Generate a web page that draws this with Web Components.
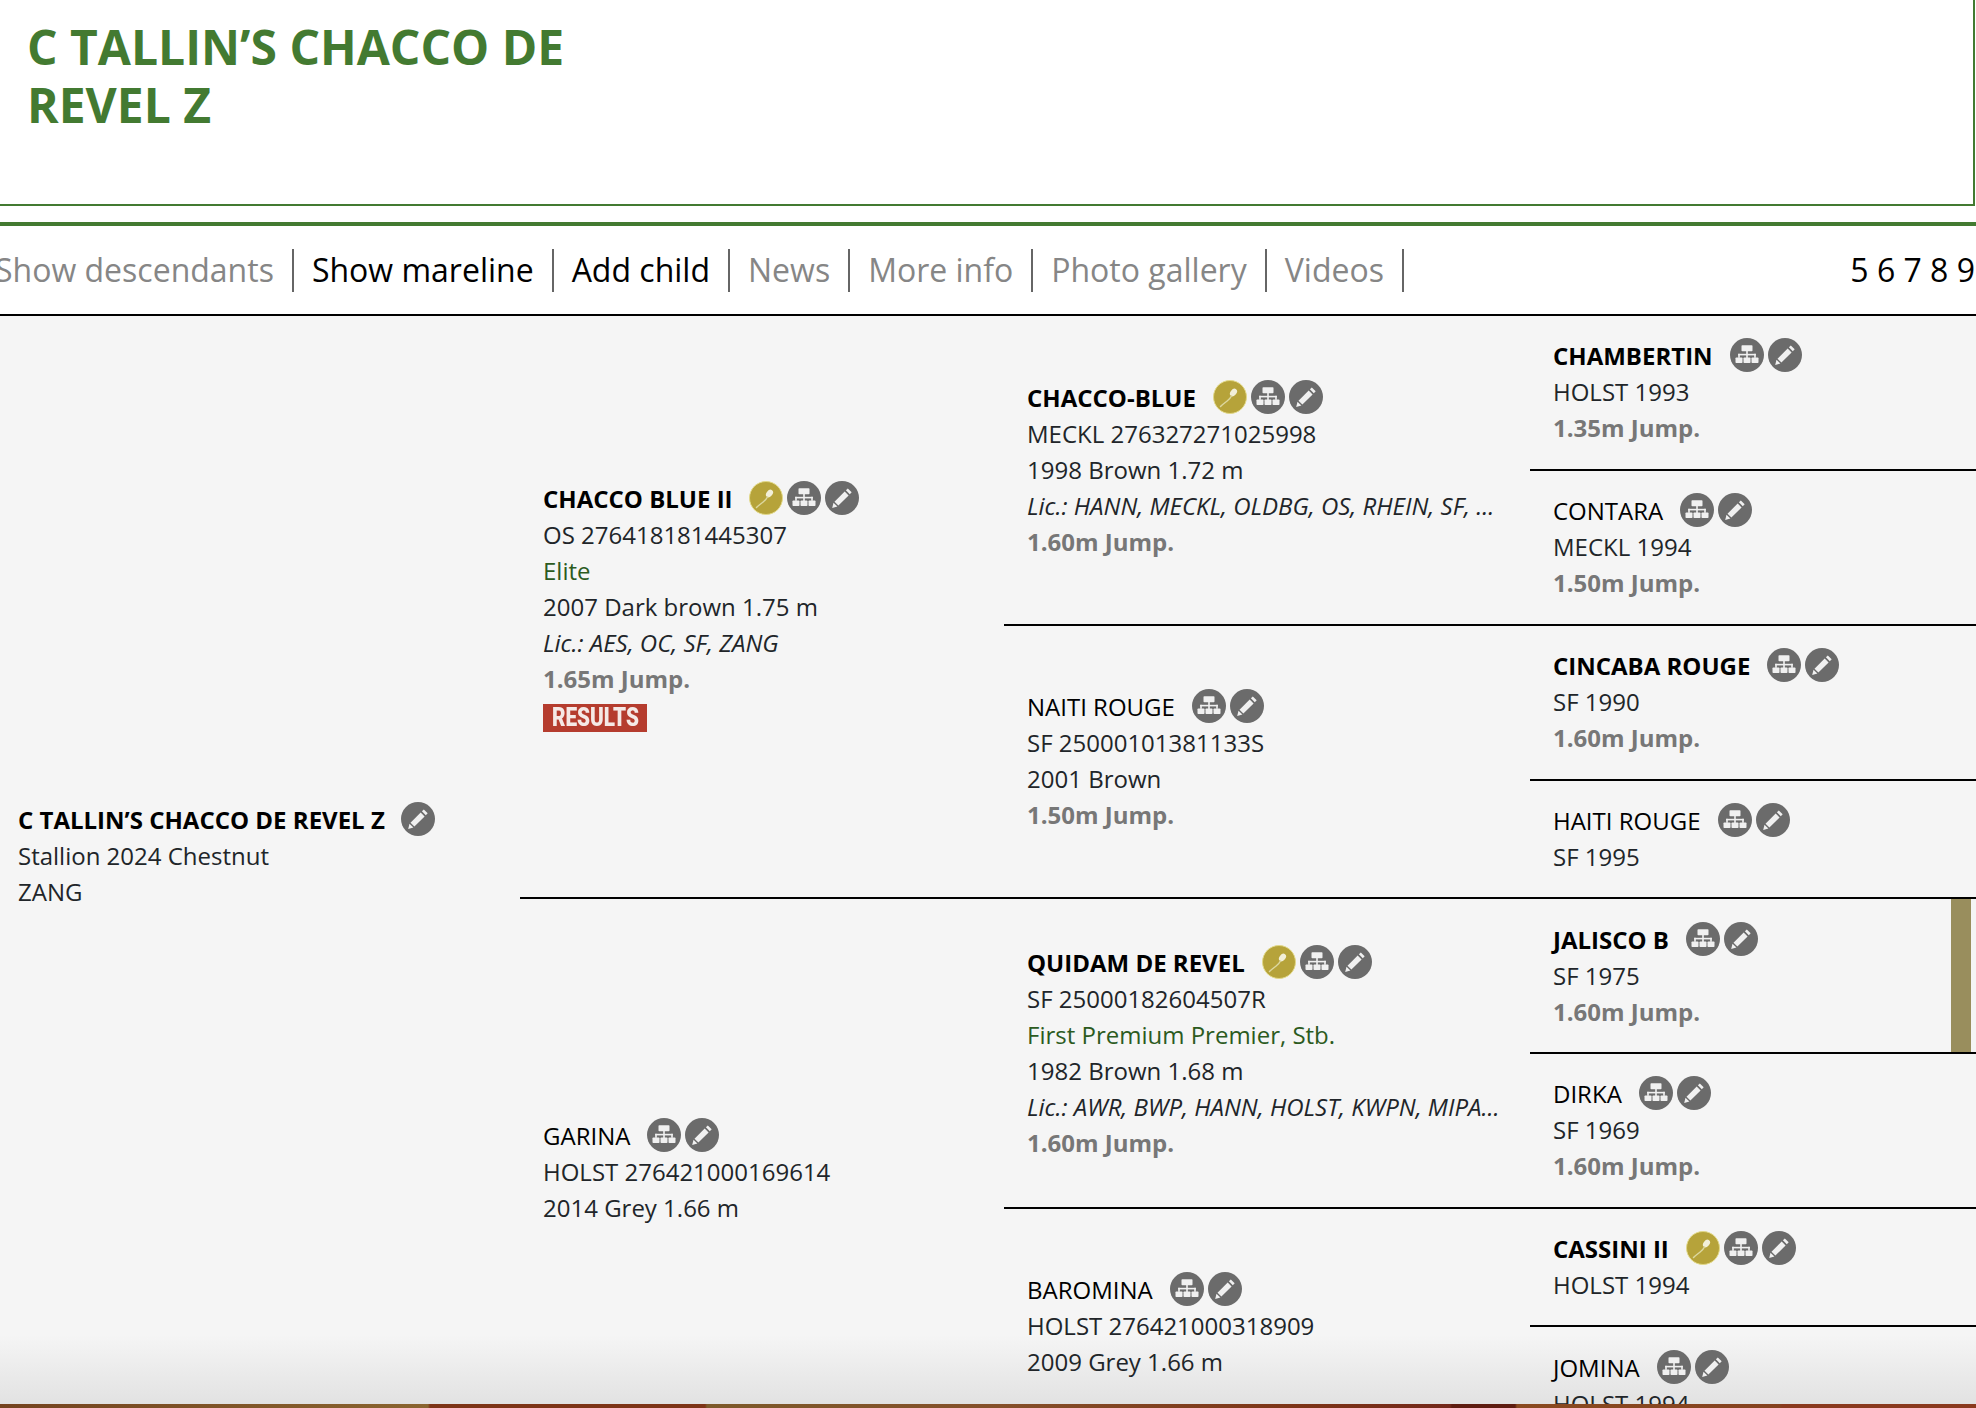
<!DOCTYPE html>
<html>
<head>
<meta charset="utf-8">
<title>C TALLIN'S CHACCO DE REVEL Z</title>
<style>
  html, body { margin: 0; height: 100%; overflow: hidden; background: #fff; }
  body { font-family: "Open Sans", sans-serif; color: #212529; }
  .wrap { margin-left: -5px; width: 1981px; }
</style>
</head>
<body>
<div class="wrap">
  <ped-title>C TALLIN’S CHACCO DE<br>REVEL Z</ped-title>
  <ped-nav pages="5 6 7 8 9">
    <ped-link off>Show descendants</ped-link>
    <ped-link>Show mareline</ped-link>
    <ped-link>Add child</ped-link>
    <ped-link off>News</ped-link>
    <ped-link off>More info</ped-link>
    <ped-link off>Photo gallery</ped-link>
    <ped-link off>Videos</ped-link>
  </ped-nav>
  <ped-tree>
    <ped-horse col="1" row="1" span="8" name="C TALLIN’S CHACCO DE REVEL Z" stallion icons="edit" root>
      <div>Stallion 2024 Chestnut</div>
      <div>ZANG</div>
    </ped-horse>

    <ped-horse col="2" row="1" span="4" name="CHACCO BLUE II" stallion icons="gold tree edit">
      <div>OS 276418181445307</div>
      <div class="pred">Elite</div>
      <div>2007 Dark brown 1.75 m</div>
      <div class="lic">Lic.: AES, OC, SF, ZANG</div>
      <div class="jump">1.65m Jump.</div>
      <ped-results>RESULTS</ped-results>
    </ped-horse>
    <ped-horse col="3" row="1" span="2" name="CHACCO-BLUE" stallion icons="gold tree edit">
      <div>MECKL 276327271025998</div>
      <div>1998 Brown 1.72 m</div>
      <div class="lic">Lic.: HANN, MECKL, OLDBG, OS, RHEIN, SF, ...</div>
      <div class="jump">1.60m Jump.</div>
    </ped-horse>
    <ped-horse col="4" row="1" name="CHAMBERTIN" stallion icons="tree edit">
      <div>HOLST 1993</div>
      <div class="jump">1.35m Jump.</div>
    </ped-horse>
    <ped-horse col="4" row="2" name="CONTARA" icons="tree edit">
      <div>MECKL 1994</div>
      <div class="jump">1.50m Jump.</div>
    </ped-horse>
    <ped-horse col="3" row="3" span="2" name="NAITI ROUGE" icons="tree edit">
      <div>SF 25000101381133S</div>
      <div>2001 Brown</div>
      <div class="jump">1.50m Jump.</div>
    </ped-horse>
    <ped-horse col="4" row="3" name="CINCABA ROUGE" stallion icons="tree edit">
      <div>SF 1990</div>
      <div class="jump">1.60m Jump.</div>
    </ped-horse>
    <ped-horse col="4" row="4" name="HAITI ROUGE" icons="tree edit" short>
      <div>SF 1995</div>
    </ped-horse>

    <ped-horse col="2" row="5" span="4" name="GARINA" icons="tree edit" nudge>
      <div>HOLST 276421000169614</div>
      <div>2014 Grey 1.66 m</div>
    </ped-horse>
    <ped-horse col="3" row="5" span="2" name="QUIDAM DE REVEL" stallion icons="gold tree edit">
      <div>SF 25000182604507R</div>
      <div class="pred">First Premium Premier, Stb.</div>
      <div>1982 Brown 1.68 m</div>
      <div class="lic">Lic.: AWR, BWP, HANN, HOLST, KWPN, MIPA...</div>
      <div class="jump">1.60m Jump.</div>
    </ped-horse>
    <ped-horse col="4" row="5" name="JALISCO B" stallion icons="tree edit" marked>
      <div>SF 1975</div>
      <div class="jump">1.60m Jump.</div>
    </ped-horse>
    <ped-horse col="4" row="6" name="DIRKA" icons="tree edit">
      <div>SF 1969</div>
      <div class="jump">1.60m Jump.</div>
    </ped-horse>
    <ped-horse col="3" row="7" span="2" name="BAROMINA" icons="tree edit">
      <div>HOLST 276421000318909</div>
      <div>2009 Grey 1.66 m</div>
    </ped-horse>
    <ped-horse col="4" row="7" name="CASSINI II" stallion icons="gold tree edit" short>
      <div>HOLST 1994</div>
    </ped-horse>
    <ped-horse col="4" row="8" name="JOMINA" icons="tree edit" short last>
      <div>HOLST 1994</div>
    </ped-horse>
  </ped-tree>
</div>
<ped-footer></ped-footer>

<script>
class PedTitle extends HTMLElement {
  constructor() {
    super();
    this.attachShadow({mode: 'open'}).innerHTML = `
      <style>
        :host { display: block; height: 204px; box-sizing: content-box; width: 1978px;
                border-bottom: 2px solid #437a31; border-right: 2px solid #437a31; }
        h1 { margin: 0; padding: 18px 0 0 32px; font: 700 48px/58px "Open Sans", sans-serif; color: #437a31; }
      </style>
      <h1><slot></slot></h1>`;
  }
}
customElements.define('ped-title', PedTitle);

class PedLink extends HTMLElement {
  constructor() {
    super();
    this.attachShadow({mode: 'open'}).innerHTML = `
      <style>
        :host { display: block; padding: 0 18px; border-right: 2px solid #666; height: 43px;
                font-size: 32px; line-height: 41px; color: #000; white-space: nowrap; }
        :host([off]) { color: #868686; }
      </style>
      <slot></slot>`;
  }
}
customElements.define('ped-link', PedLink);

class PedNav extends HTMLElement {
  constructor() {
    super();
    this.attachShadow({mode: 'open'}).innerHTML = `
      <style>
        :host { display: flex; align-items: center; margin-top: 16px; height: 88px; box-sizing: content-box;
                border-top: 4px solid #437a31; border-bottom: 2px solid #000; background: #fff; }
        .links { display: flex; margin-left: -18px; }
        .pages { margin-left: auto; margin-right: 1px; padding-bottom: 2px; font-size: 32px; color: #000; white-space: nowrap; }
      </style>
      <div class="links"><slot></slot></div>
      <div class="pages"></div>`;
  }
  connectedCallback() {
    this.shadowRoot.querySelector('.pages').textContent = this.getAttribute('pages');
  }
}
customElements.define('ped-nav', PedNav);

class PedTree extends HTMLElement {
  constructor() {
    super();
    this.attachShadow({mode: 'open'}).innerHTML = `
      <style>
        /* grey fades out towards the footer strip, behind the text */
        :host { display: grid; grid-template-columns: 525px 484px 526px 446px;
                background: linear-gradient(#f5f5f5 1335px, #e2e2e2 1404px) fixed; }
      </style>
      <slot></slot>`;
  }
}
customElements.define('ped-tree', PedTree);

const ICONS = {
  tree: `<svg viewBox="0 0 34 34"><circle cx="17" cy="17" r="17" fill="#6b6b6b"/><g fill="#f0f0f0">
    <rect x="11.5" y="7.3" width="11" height="6" rx=".8"/>
    <rect x="5.5" y="19.5" width="7" height="5.6" rx=".8"/><rect x="13.5" y="19.5" width="7" height="5.6" rx=".8"/><rect x="21.5" y="19.5" width="7" height="5.6" rx=".8"/>
    <rect x="16.2" y="13" width="1.6" height="7"/><rect x="8.2" y="15.8" width="17.6" height="1.6"/>
    <rect x="8.2" y="15.8" width="1.6" height="4"/><rect x="24.2" y="15.8" width="1.6" height="4"/></g></svg>`,
  edit: `<svg viewBox="0 0 34 34"><circle cx="17" cy="17" r="17" fill="#6b6b6b"/>
    <path d="M22.8 7.4l3.9 3.9-1.9 1.9-3.9-3.9zM19.7 10.5l3.9 3.9-10.2 10.2-3.9-3.9zM8.5 21.7l3.9 3.9-5.2 1.3z" fill="#f0f0f0"/></svg>`,
  gold: `<svg viewBox="0 0 34 34"><circle cx="17" cy="17" r="16.5" fill="#b6a33a" stroke="#e2d98a" stroke-width="1"/>
    <ellipse cx="20.5" cy="12.5" rx="3" ry="4.2" transform="rotate(38 20.5 12.5)" fill="#f2efd8"/>
    <path d="M18.5 16C17 19 15.5 20 13.5 21.5 11.5 23 9.5 24.5 7.5 26.5" fill="none" stroke="#dcd79f" stroke-width="1.5" stroke-linecap="round"/></svg>`
};

class PedIcon extends HTMLElement {
  constructor() {
    super();
    this.attachShadow({mode: 'open'}).innerHTML = `
      <style>
        :host { display: block; width: 34px; height: 34px; }
        svg { display: block; width: 34px; height: 34px; filter: blur(.35px); }
      </style>`;
  }
  connectedCallback() {
    this.shadowRoot.innerHTML += ICONS[this.getAttribute('type')];
  }
}
customElements.define('ped-icon', PedIcon);

class PedResults extends HTMLElement {
  constructor() {
    super();
    this.attachShadow({mode: 'open'}).innerHTML = `
      <style>
        :host { display: block; width: 104px; height: 28px; background: #b53c2e; color: #f5e9e6; margin-top: 7px;
                font: 900 25px/28px Roboto, sans-serif; text-align: center; overflow: hidden; }
        span { display: inline-block; transform: scaleX(.83); transform-origin: 50% 50%; filter: blur(.4px); margin: 0 -14px; }
      </style>
      <span><slot></slot></span>`;
  }
}
customElements.define('ped-results', PedResults);

class PedHorse extends HTMLElement {
  constructor() {
    super();
    this.attachShadow({mode: 'open'}).innerHTML = `
      <style>
        :host { display: flex; flex-direction: column; justify-content: center; position: relative;
                box-sizing: border-box; padding: 22px 0 23px 23px; border-bottom: 2px solid #000;
                font-size: 24px; line-height: 36px; color: #212529; }
        :host([root]) { border-bottom: 0; padding-bottom: 73px; }
        :host([short]) { padding-bottom: 22px; }
        :host([marked]) { padding-top: 23px; padding-bottom: 22px; }
        :host([nudge]) { padding-top: 24px; }
        :host([last]) { padding-top: 23px; }
        .name { display: flex; align-items: center; height: 36px; color: #000; white-space: nowrap; }
        :host([stallion]) .name { font-weight: 700; }
        .icons { display: flex; gap: 4px; margin-left: 17px; margin-top: -2px; }
        :host([root]) .icons, :host([col="2"][stallion]) .icons { margin-left: 16px; }
        .mark { display: none; position: absolute; top: 0; bottom: 0; right: 5px; width: 20px; background: #998e5d; }
        :host([marked]) .mark { display: block; }
        ::slotted(div) { white-space: nowrap; }
        ::slotted(.pred) { color: #2c5b1e; }
        ::slotted(.lic) { font-style: italic; }
        ::slotted(.jump) { font-weight: 700; color: #777; }
      </style>
      <div class="name"><span class="n"></span><span class="icons"></span></div>
      <slot></slot>
      <div class="mark"></div>`;
  }
  connectedCallback() {
    const col = this.getAttribute('col');
    const row = this.getAttribute('row');
    const span = this.getAttribute('span') || 1;
    this.style.gridColumn = col;
    this.style.gridRow = row + ' / span ' + span;
    this.shadowRoot.querySelector('.n').textContent = this.getAttribute('name');
    const icons = this.shadowRoot.querySelector('.icons');
    this.getAttribute('icons').split(' ').forEach(t => {
      const i = document.createElement('ped-icon');
      i.setAttribute('type', t);
      icons.appendChild(i);
    });
  }
}
customElements.define('ped-horse', PedHorse);

class PedFooter extends HTMLElement {
  constructor() {
    super();
    this.attachShadow({mode: 'open'}).innerHTML = `
      <style>
        :host { display: block; position: fixed; left: 0; right: 0; bottom: 0; height: 4px;
                background: linear-gradient(90deg, #74431f 0, #8a6530 428px, #7d3417 430px, #7d3417 705px, #7d5a2a 707px, #85502a 1000px, #7d3417 1300px, #73281a 1450px, #5e1c10 1452px, #5e1c10 1515px, #8a4a20 1517px, #85421f 1780px, #8a3a1e 1782px, #8a3a1e 100%); }
      </style>`;
  }
}
customElements.define('ped-footer', PedFooter);
</script>
</body>
</html>
